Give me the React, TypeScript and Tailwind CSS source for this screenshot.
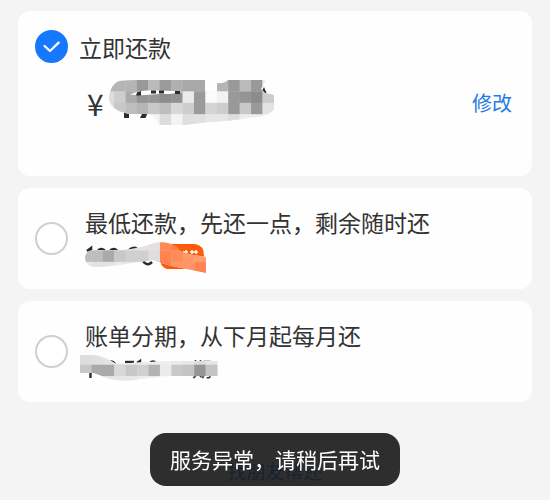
import React, { useState } from 'react';

type Cell = [number, number, string];

interface MosaicProps {
  id: string;
  className: string;
  width: number;
  height: number;
  outline: string;
  originX: number;
  originY: number;
  cells: Cell[];
  under?: React.ReactNode;
  over?: React.ReactNode;
}

const CELL = 11.42;

// 打码涂抹：按格子上色，再用手绘轮廓裁切；under / over 是露出来的残留笔画
const Mosaic: React.FC<MosaicProps> = ({ id, className, width, height, outline, originX, originY, cells, under, over }) => (
  <svg
    className={`overflow-visible ${className}`}
    width={width}
    height={height}
    viewBox={`0 0 ${width} ${height}`}
    fill="none"
    aria-hidden="true"
  >
    <clipPath id={id}>
      <path d={outline} />
    </clipPath>
    {under}
    <g clipPath={`url(#${id})`}>
      <rect width={width} height={height} fill="#ebebeb" />
      {cells.map(([col, row, fill]) => (
        <rect
          key={`${col}-${row}`}
          x={originX + col * CELL}
          y={originY + row * CELL}
          width={CELL + 0.3}
          height={CELL + 0.3}
          fill={fill}
        />
      ))}
    </g>
    {over}
  </svg>
);

const toCells = (rows: string[][]): Cell[] =>
  rows.flatMap((row, y) => row.map((fill, x): Cell => [x, y, fill]));

const amountCells = toCells([
  ['#b5b5b5', '#b5b5b5', '#b5b5b5', '#999999', '#bababa', '#9b9b9b', '#b0b0b0', '#a8a8a8', '#a8a8a8', '#fdfdfd', '#b5b5b5', '#999999', '#bbbbbb', '#999999', '#f2f2f2'],
  ['#dddddd', '#cdcdcd', '#ababab', '#949494', '#969696', '#8c8c8c', '#919191', '#ebebeb', '#9b9b9b', '#fbfbfb', '#f2f2f2', '#999999', '#959595', '#8c8c8c', '#cccccc'],
  ['#dcdcdc', '#c8c8c8', '#bdbdbd', '#b5b5b5', '#c9c9c9', '#bdbdbd', '#d8d8d8', '#cdcdcd', '#9b9b9b', '#d4d4d4', '#cdcdcd', '#999999', '#c8c8c8', '#999999', '#e3e3e3'],
  ['#ffffff', '#ffffff', '#ffffff', '#f4f4f4', '#f4f4f4', '#dcdcdc', '#f3f3f3', '#dedede', '#e0e0e0', '#e6e6e6', '#e6e6e6', '#dddddd', '#ededed', '#ededed', '#f3f3f3'],
]);

const minimumCells = toCells([
  ['#d8d8d8', '#d8d8d8', '#d8d8d8', '#dddddd', '#dddddd', '#e3e3e3', '#e3e0df', '#ff8a55', '#ff7a40', '#ff7a40', '#ff7a40'],
  ['#bdbdbd', '#bdbdbd', '#aaaaaa', '#c8c8c8', '#d0d0d0', '#cfcfcf', '#dddddd', '#ff8450', '#ff8c58', '#ff9868', '#ff9d70'],
  ['#e8e8e8', '#e3e3e3', '#e3e3e3', '#e8e8e8', '#e8e8e8', '#e8e8e8', '#e8e8e8', '#ff8450', '#ff9565', '#ff9565', '#ff8450'],
]);

const installmentCells = toCells([
  ['#dddddd', '#e0e0e0', '#e3e3e3', '#e8e8e8', '#ececec', '#ececec', '#eeeeee', '#eeeeee', '#eaeaea', '#e6e6e6', '#dcdcdc', '#e6e6e6'],
  ['#c8c8c8', '#aaaaaa', '#aaaaaa', '#d8d8d8', '#c8c8c8', '#d0d0d0', '#b3b3b3', '#ebebeb', '#c8c8c8', '#c4c4c4', '#969696', '#c4c4c4'],
  ['#ebebeb', '#e8e8e8', '#e6e6e6', '#e6e6e6', '#e8e8e8', '#eeeeee', '#eeeeee', '#fefefe', '#fefefe', '#fefefe', '#fefefe', '#fefefe'],
]);

interface RadioProps {
  id: string;
  checked: boolean;
  onSelect: () => void;
}

const Radio: React.FC<RadioProps> = ({ id, checked, onSelect }) => (
  <span className="relative block size-[33px] shrink-0">
    <input
      id={id}
      type="radio"
      name="repayment"
      checked={checked}
      onChange={onSelect}
      className="block size-[33px] appearance-none rounded-full border-2 border-[#cfcfcf] bg-white checked:border-[#1677ff] checked:bg-[#1677ff]"
    />
    {checked && (
      <svg className="pointer-events-none absolute inset-0" viewBox="0 0 33 33" fill="none" aria-hidden="true">
        <path d="M9.6 16 L15 21 L23.6 12.6" stroke="#fff" strokeWidth="2.3" strokeLinecap="round" strokeLinejoin="round" />
      </svg>
    )}
  </span>
);

const App: React.FC = () => {
  const [selected, setSelected] = useState('full');

  return (
    <div className="min-h-screen bg-[#f4f4f5] px-[18px] pt-[11px] font-['Noto_Sans_CJK_SC',sans-serif] text-[#333333]">
      <form className="flex flex-col gap-3">
        <section className="rounded-xl bg-[#fefefe] px-[17px] pt-[19px] pb-[33px]">
          <div className="flex items-center gap-[11px]">
            <Radio id="full" checked={selected === 'full'} onSelect={() => setSelected('full')} />
            <label htmlFor="full" className="text-[23px] leading-8">立即还款</label>
          </div>
          <div className="flex h-20 items-center justify-between pr-[3px] pl-[52px]">
            <div className="relative text-3xl leading-10">
              ¥
              <Mosaic
                id="amount-mask"
                className="absolute -top-[3px] left-[22px]"
                width={165}
                height={48}
                outline="M10 1 Q20 0 30 0 H96 V11 H108 V3 Q115 4 119 0 H157 L152 9 L156 13 L165 15 V29 Q160 35 153 36 Q125 41 100 42 L75 45 H50 Q46 34 40 34 H20 Q0 30 0 17 Q2 4 10 1 Z"
                originX={-6.4}
                originY={0}
                cells={amountCells}
                under={
                  <g fill="#2b2b2b">
                    <rect x="15" y="31" width="5" height="7" />
                    <path d="M34 32 H39 L36.5 38 H31 Z" />
                    <path d="M152 13 L155 7 L157.5 13 Z" />
                  </g>
                }
                over={
                  <>
                    <path d="M21 14.5 Q32 9.5 50 10.5 Q66 10.5 74 12 Q64 14.5 50 14 Q32 16 21 14.5 Z" fill="#fbfbfb" />
                    <g fill="#2b2b2b">
                      <path d="M28 12.5 L32 11 V15.5 H27 Z" />
                      <rect x="42" y="10.5" width="5" height="3" />
                      <rect x="50" y="10.5" width="5" height="3" />
                      <rect x="66" y="11" width="5" height="3" />
                    </g>
                  </>
                }
              />
            </div>
            <button type="button" className="text-xl text-[#1f7be6]">修改</button>
          </div>
        </section>

        <section className="flex items-center gap-[17px] rounded-xl bg-[#fefefe] px-[17px] py-4">
          <Radio id="minimum" checked={selected === 'minimum'} onSelect={() => setSelected('minimum')} />
          <div>
            <label htmlFor="minimum" className="block text-[23px] leading-9">最低还款，先还一点，剩余随时还</label>
            <div className="relative h-[33px]">
              <Mosaic
                id="minimum-mask"
                className="absolute top-0 left-0"
                width={121}
                height={34}
                outline="M0 17 Q1 10 10 10 H36 Q54 9 66 4 Q75 1 83 3 Q90 5 95 11 L103 14 L121 17 V33 L97 28 Q80 25 68 20 L40 24 Q20 27 10 27 Q0 26 0 17 Z"
                originX={-5}
                originY={-1}
                cells={minimumCells}
                under={
                  <>
                    <g stroke="#2b2b2b" strokeWidth="2.6">
                      <path d="M2 11 L6 8 V12" />
                      <path d="M12 12 Q16 6 21 12" />
                      <path d="M24 12 Q29 6 33 12" />
                      <path d="M43 11 Q48 6 52 9" />
                      <path d="M58 21 Q62 27 67 22" />
                    </g>
                    <path d="M77 4 H110 Q119 5 119 16 V25 Q117 29 112 29 H82 Q78 28 76 24 Z" fill="#ff5a0a" />
                    <path d="M98 12 H103 M105 12 H113 M101 10 V14 M107 10 V14 M111 10 V14" stroke="#fff" strokeWidth="1.4" />
                  </>
                }
              />
            </div>
          </div>
        </section>

        <section className="flex items-center gap-[17px] rounded-xl bg-[#fefefe] px-[17px] py-4">
          <Radio id="installment" checked={selected === 'installment'} onSelect={() => setSelected('installment')} />
          <div>
            <label htmlFor="installment" className="block text-[23px] leading-9">账单分期，从下月起每月还</label>
            <div className="relative h-[33px] pl-[107px] text-xl leading-8">
              期
              <Mosaic
                id="installment-mask"
                className="absolute top-0 -left-[5px]"
                width={138}
                height={32}
                outline="M0 2 H14 Q26 4 36 11 L50 10 L90 8 H138 V23 H88 L60 26 Q45 29 30 26 L14 20 H0 Z"
                originX={0}
                originY={0.3}
                cells={installmentCells}
                under={
                  <g stroke="#2b2b2b" strokeWidth="2.4">
                    <path d="M10.5 19 V25" />
                    <path d="M28 11 Q31.5 6 35 11" />
                    <path d="M45 9 H54" />
                    <path d="M57 10 L60 8 V11" />
                    <path d="M70 10 Q73 7 76 10" />
                  </g>
                }
              />
            </div>
          </div>
        </section>
      </form>

      <div className="mt-[55px] text-center text-[19px] leading-7">
        <a href="#friend" className="text-[#1677ff]">找朋友帮还</a>
      </div>
      <div
        role="status"
        className="fixed bottom-3.5 left-1/2 -translate-x-1/2 rounded-2xl bg-[#181818]/90 px-5 py-3 text-[21px] leading-[29px] whitespace-nowrap text-white"
      >
        服务异常，请稍后再试
      </div>
    </div>
  );
};

export default App;
